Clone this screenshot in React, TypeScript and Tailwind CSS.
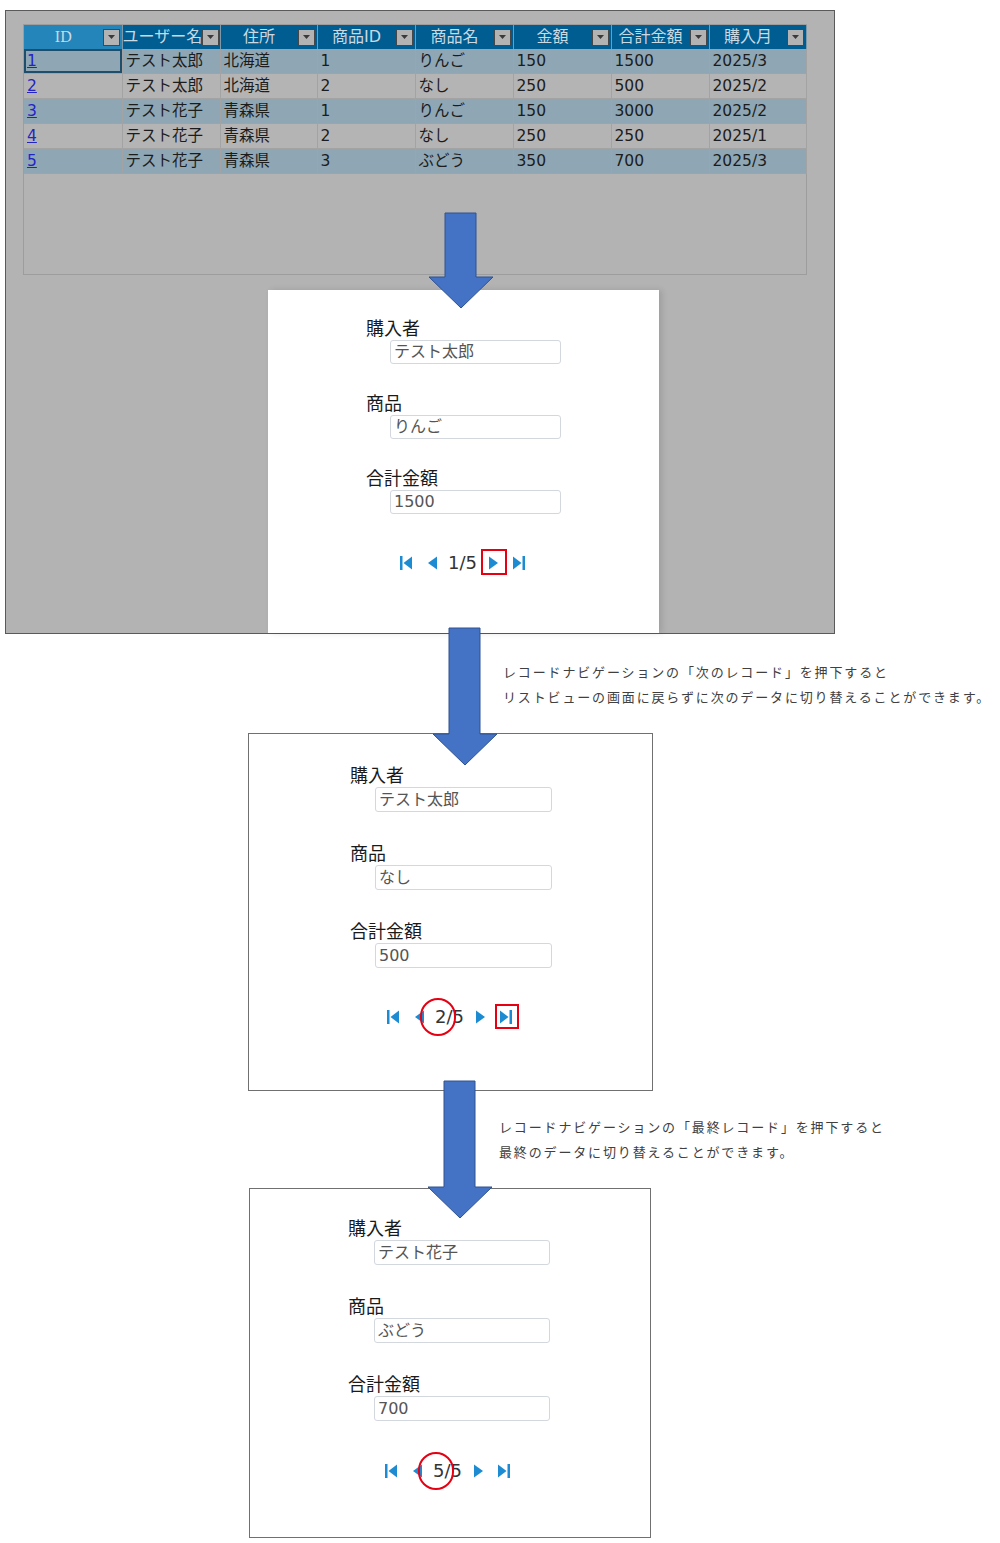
import React from 'react';

const headers = ['ID', 'ユーザー名', '住所', '商品ID', '商品名', '金額', '合計金額', '購入月'];
const rows = [
  ['1', 'テスト太郎', '北海道', '1', 'りんご', '150', '1500', '2025/3'],
  ['2', 'テスト太郎', '北海道', '2', 'なし', '250', '500', '2025/2'],
  ['3', 'テスト花子', '青森県', '1', 'りんご', '150', '3000', '2025/2'],
  ['4', 'テスト花子', '青森県', '2', 'なし', '250', '250', '2025/1'],
  ['5', 'テスト花子', '青森県', '3', 'ぶどう', '350', '700', '2025/3'],
];
const colW = [98, 98, 97, 98, 98, 98, 98, 97];

const NAV_BLUE = '#1c8bd2';

function FirstIcon() {
  return (
    <svg width="12" height="14" viewBox="0 0 12 14" fill={NAV_BLUE}>
      <rect x="0" y="0" width="2.5" height="14" />
      <polygon points="12,0.5 3.5,7 12,13.5" />
    </svg>
  );
}
function PrevIcon() {
  return (
    <svg width="9" height="14" viewBox="0 0 9 14" fill={NAV_BLUE}>
      <polygon points="9,0.5 0,7 9,13.5" />
    </svg>
  );
}
function NextIcon() {
  return (
    <svg width="9" height="14" viewBox="0 0 9 14" fill={NAV_BLUE}>
      <polygon points="0,0.5 9,7 0,13.5" />
    </svg>
  );
}
function LastIcon() {
  return (
    <svg width="12" height="14" viewBox="0 0 12 14" fill={NAV_BLUE}>
      <polygon points="0,0.5 8.5,7 0,13.5" />
      <rect x="9.5" y="0" width="2.5" height="14" />
    </svg>
  );
}

type Mark = 'next' | 'last-circle' | 'circle';

function Nav({ page, mark, cls }: { page: number; mark: Mark; cls: string }) {
  return (
    <div className={`flex items-center h-[26px] ${cls}`}>
      <span className="flex"><FirstIcon /></span>
      <span className="flex ml-[16px]"><PrevIcon /></span>
      <span className="relative ml-[11px] text-[18px] leading-[26px] text-[#333] font-['DejaVu_Sans',sans-serif]">
        {page}/5
        {mark !== 'next' && (
          <span className="absolute left-[-15px] top-[-6px] w-[36px] h-[38px] rounded-full border-2 border-[#e60012]" />
        )}
      </span>
      <span className="relative flex ml-[12px]">
        <NextIcon />
        {mark === 'next' && (
          <span className="absolute left-[-8px] right-[-9px] top-[-7px] bottom-[-5px] border-2 border-[#e60012]" />
        )}
      </span>
      <span className="relative flex ml-[15px]">
        <LastIcon />
        {mark === 'last-circle' && (
          <span className="absolute left-[-5px] right-[-7px] top-[-6px] bottom-[-5px] border-2 border-[#e60012]" />
        )}
      </span>
    </div>
  );
}

function Field({ label, value, gapCls, labelCls, inputCls }: { label: string; value: string; gapCls: string; labelCls: string; inputCls: string }) {
  return (
    <div className={gapCls}>
      <div className={`text-[18px] leading-[22px] text-[#1a1a1a] ${labelCls}`}>{label}</div>
      <div className={`mt-[2px] border border-[#d3d7de] rounded-[3px] px-[3px] flex items-center text-[16px] text-[#555] font-['DejaVu_Sans','Noto_Sans_CJK_JP',sans-serif] ${inputCls}`}>
        {value}
      </div>
    </div>
  );
}

function RecordForm({ buyer, item, total, page, mark, pt, gapCls, labelCls, inputCls, navCls }: {
  buyer: string; item: string; total: string; page: number; mark: Mark;
  pt: string; gapCls: string; labelCls: string; inputCls: string; navCls: string;
}) {
  return (
    <div className={pt}>
      <Field label="購入者" value={buyer} gapCls="" labelCls={labelCls} inputCls={inputCls} />
      <Field label="商品" value={item} gapCls={gapCls} labelCls={labelCls} inputCls={inputCls} />
      <Field label="合計金額" value={total} gapCls={gapCls} labelCls={labelCls} inputCls={inputCls} />
      <Nav page={page} mark={mark} cls={navCls} />
    </div>
  );
}

function DownArrow({ cls, h }: { cls: string; h: number }) {
  const head = h - 32;
  return (
    <svg className={`absolute ${cls}`} width="66" height={h} viewBox={`0 0 66 ${h}`}>
      <polygon
        points={`17,1 48,1 48,${head} 65,${head} 33,${h - 1} 1,${head} 17,${head}`}
        fill="#4472c4"
        stroke="#2f528f"
        strokeWidth="1"
      />
    </svg>
  );
}

export default function App() {
  return (
    <div className="relative w-[1000px] h-[1543px] bg-white overflow-hidden font-['Noto_Sans_CJK_JP',sans-serif]">
      {/* list view screenshot, dimmed */}
      <div className="mt-[10px] ml-[5px] w-[830px] h-[624px] border border-[#5a5a5a] bg-[#b3b3b3] pl-[17px] pt-[13px]">
        <div className="w-[784px] h-[251px] border border-[#9d9d9d]">
          <table className="table-fixed border-collapse w-[782px]">
            <colgroup>
              {colW.map((w, i) => <col key={i} style={{ width: w }} />)}
            </colgroup>
            <thead>
              <tr>
                {headers.map((h, i) => (
                  <th key={h} className={`h-[24px] p-0 font-normal border-r border-[#7d98a8] ${i === 0 ? 'bg-[#2485ba]' : 'bg-[#005d91]'}`}>
                    <div className="flex items-center h-[24px]">
                      <span className={`flex-1 text-center whitespace-nowrap text-[16px] leading-[24px] text-[#cbd9e2] ${i === 0 ? "font-['Liberation_Serif',serif]" : "font-['DejaVu_Sans','Noto_Sans_CJK_JP',sans-serif]"}`}>{h}</span>
                      <span className="mr-[2px] w-[17px] h-[17px] shrink-0 bg-[#b3b3b3] border border-[#474747] flex items-center justify-center">
                        <svg width="7" height="4" viewBox="0 0 7 4"><polygon points="0,0 7,0 3.5,4" fill="#3a3a3a" /></svg>
                      </span>
                    </div>
                  </th>
                ))}
              </tr>
            </thead>
            <tbody>
              {rows.map((r, ri) => (
                <tr key={ri} className={ri % 2 === 0 ? 'bg-[#8fa7b4]' : 'bg-[#b4b4b4]'}>
                  {r.map((c, ci) => (
                    <td
                      key={ci}
                      className={`h-[24px] p-0 pl-[3px] border-r border-b border-[#a3a3a3] text-[15.5px] leading-[24px] text-[#1c1c1c] whitespace-nowrap font-['DejaVu_Sans','Noto_Sans_CJK_JP',sans-serif] ${ri === 0 && ci === 0 ? 'shadow-[inset_0_0_0_2px_#1f4e6c]' : ''}`}
                    >
                      {ci === 0 ? <span className="text-[#2424c4] underline">{c}</span> : c}
                    </td>
                  ))}
                </tr>
              ))}
            </tbody>
          </table>
        </div>
        <div className="ml-[245px] mt-[15px] w-[391px] h-[343px] bg-white shadow-[3px_0_6px_rgba(0,0,0,0.12)]">
          <RecordForm
            buyer="テスト太郎" item="りんご" total="1500" page={1} mark="next"
            pt="pt-[26px]" gapCls="mt-[27px]" labelCls="ml-[98px] text-[17.5px]" inputCls="ml-[122px] w-[171px] h-[24px]" navCls="mt-[36px] ml-[132px]"
          />
        </div>
      </div>

      <div className="ml-[503px] mt-[25px] text-[13px] leading-[25px] tracking-[1.85px] text-[#404040] whitespace-nowrap">
        <div>レコードナビゲーションの「次のレコード」を押下すると</div>
        <div>リストビューの画面に戻らずに次のデータに切り替えることができます。</div>
      </div>

      <div className="ml-[248px] mt-[24px] w-[405px] h-[358px] border border-[#707070] bg-white">
        <RecordForm
          buyer="テスト太郎" item="なし" total="500" page={2} mark="last-circle"
          pt="pt-[29px]" gapCls="mt-[29px]" labelCls="ml-[101px]" inputCls="ml-[126px] w-[177px] h-[25px]" navCls="mt-[36px] ml-[138px]"
        />
      </div>

      <div className="ml-[499px] mt-[23px] text-[13px] leading-[25px] tracking-[1.85px] text-[#404040] whitespace-nowrap">
        <div>レコードナビゲーションの「最終レコード」を押下すると</div>
        <div>最終のデータに切り替えることができます。</div>
      </div>

      <div className="ml-[249px] mt-[24px] w-[402px] h-[350px] border border-[#707070] bg-white">
        <RecordForm
          buyer="テスト花子" item="ぶどう" total="700" page={5} mark="circle"
          pt="pt-[27px]" gapCls="mt-[29px]" labelCls="ml-[98px]" inputCls="ml-[124px] w-[176px] h-[25px]" navCls="mt-[37px] ml-[135px]"
        />
      </div>

      <DownArrow cls="left-[428px] top-[212px]" h={97} />
      <DownArrow cls="left-[432px] top-[627px]" h={139} />
      <DownArrow cls="left-[427px] top-[1080px]" h={139} />
    </div>
  );
}
